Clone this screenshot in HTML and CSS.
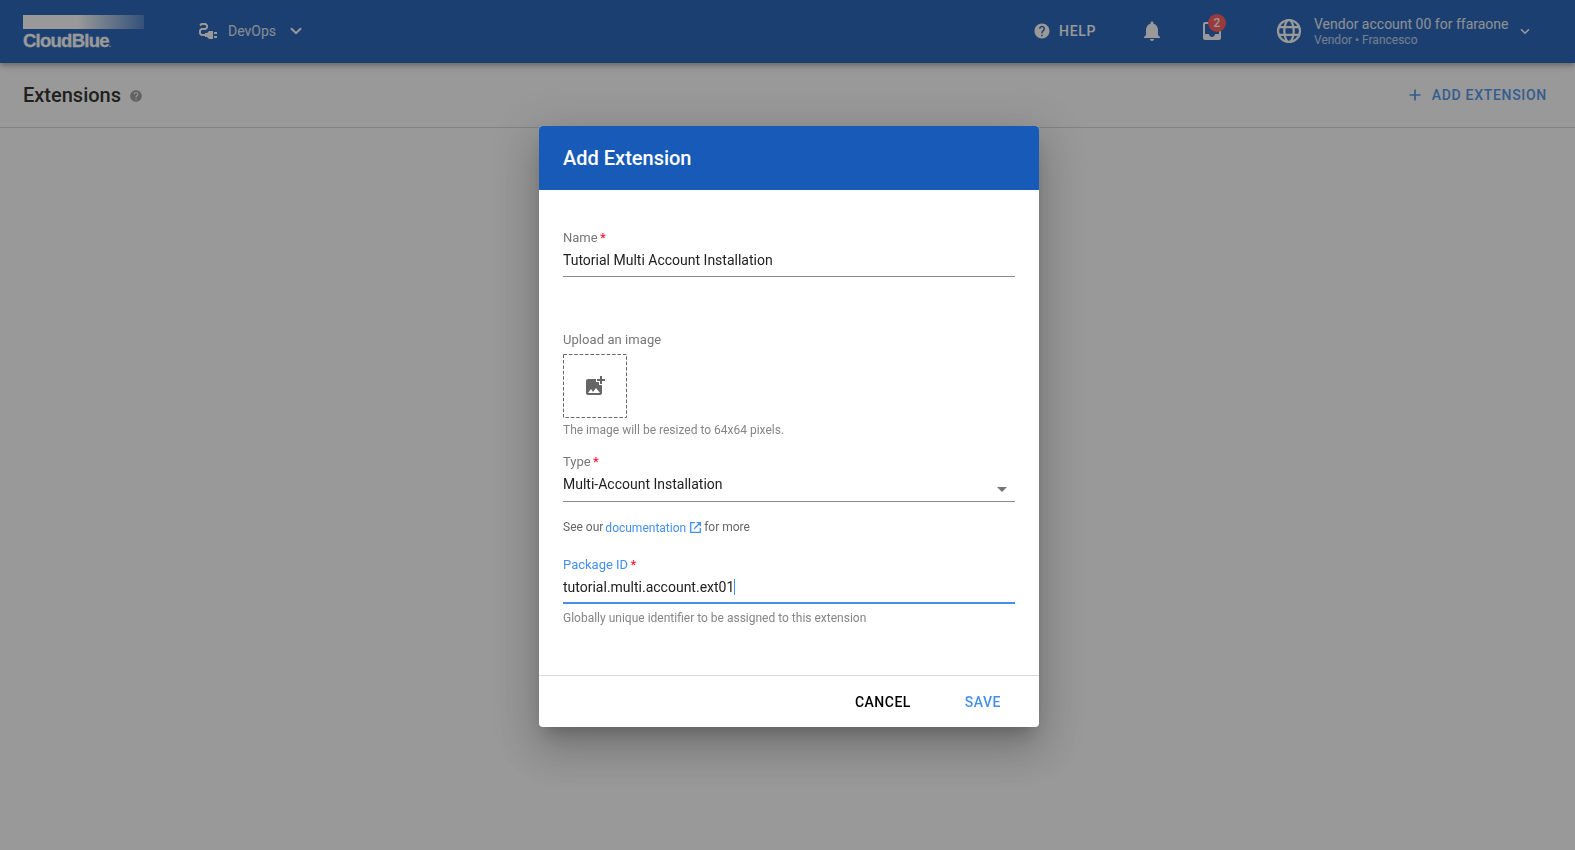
FILE: index.html
```html
<!DOCTYPE html>
<html lang="en">
<head>
<meta charset="utf-8">
<title>Extensions</title>
<link rel="stylesheet" href="styles.css">
</head>
<body>
<header class="topbar">
  <div class="brand"><div class="brand-bar"></div><div class="brand-name">CloudBlue<span class="brand-dot">.</span></div></div>
  <div class="module">
    <svg class="plug" width="18" height="17" viewBox="0 0 18 17" fill="currentColor"><path d="M1 2.500L2.500 1H6.500L8 2.500V4.500L6.500 6H2.500L1 7.500V10.500L2.500 12H6" fill="none" stroke="currentColor" stroke-width="1.900"/><path d="M10 8h4v8h-4l-2-2H6v-4h2zM15 9h3v2h-3zM15 13h3v2h-3z"/></svg>
    <span>DevOps</span>
    <svg class="module-arrow" width="12" height="8" viewBox="0 0 12 8"><path d="M1 1.200l5 5 5-5" fill="none" stroke="currentColor" stroke-width="2"/></svg>
  </div>
  <div class="help"><svg width="18" height="18" viewBox="0 0 24 24" fill="currentColor"><path d="M12 2C6.480 2 2 6.480 2 12s4.480 10 10 10 10-4.480 10-10S17.520 2 12 2zm1 17h-2v-2h2v2zm2.070-7.750-.9.920C13.450 12.900 13 13.500 13 15h-2v-.5c0-1.100.45-2.100 1.170-2.830l1.240-1.260c.37-.36.59-.86.59-1.410 0-1.100-.9-2-2-2s-2 .9-2 2H8c0-2.210 1.790-4 4-4s4 1.790 4 4c0 .88-.36 1.680-.93 2.250z"/></svg><span>HELP</span></div>
  <svg class="bell" width="24" height="24" viewBox="0 0 24 24" fill="currentColor"><path d="M12 22c1.100 0 2-.9 2-2h-4c0 1.100.9 2 2 2zm6-6v-5c0-3.070-1.630-5.640-4.500-6.320V4c0-.83-.67-1.500-1.500-1.500s-1.500.67-1.500 1.500v.68C7.640 5.360 6 7.920 6 11v5l-2 2v1h16v-1l-2-2z"/></svg>
  <div class="inbox"><svg width="24" height="24" viewBox="0 0 24 24" fill="currentColor"><path d="M19 3H5a2 2 0 0 0-2 2v14a2 2 0 0 0 2 2h14a2 2 0 0 0 2-2V5a2 2 0 0 0-2-2zm0 12h-4c0 1.660-1.350 3-3 3s-3-1.340-3-3H5V5h14v10z"/></svg><span class="badge">2</span></div>
  <svg class="globe" width="26" height="26" viewBox="0 0 26 26" fill="none" stroke="currentColor" stroke-width="2.200"><circle cx="13" cy="13" r="11"/><ellipse cx="13" cy="13" rx="4.700" ry="11"/><path d="M3 9.200h20M3 16.800h20"/></svg>
  <div class="account"><span class="account-name">Vendor account 00 for ffaraone</span><span class="account-role">Vendor • Francesco</span></div>
  <svg class="account-arrow" width="10" height="7" viewBox="0 0 10 7"><path d="M1 1.200l4 4 4-4" fill="none" stroke="currentColor" stroke-width="1.600"/></svg>
</header>
<div class="titlebar">
  <h1>Extensions</h1>
  <svg class="hint" width="14" height="14" viewBox="0 0 24 24" fill="currentColor"><path d="M12 2C6.480 2 2 6.480 2 12s4.480 10 10 10 10-4.480 10-10S17.520 2 12 2zm1 17h-2v-2h2v2zm2.070-7.750-.9.920C13.450 12.900 13 13.500 13 15h-2v-.5c0-1.100.45-2.100 1.170-2.830l1.240-1.260c.37-.36.59-.86.59-1.410 0-1.100-.9-2-2-2s-2 .9-2 2H8c0-2.210 1.790-4 4-4s4 1.790 4 4c0 .88-.36 1.680-.93 2.250z"/></svg>
  <div class="add"><svg width="12" height="12" viewBox="0 0 12 12"><path d="M6 .5v11M.5 6h11" stroke="currentColor" stroke-width="1.700"/></svg><span>ADD EXTENSION</span></div>
</div>
<div class="overlay">
  <section class="dialog">
    <div class="dialog-head">Add Extension</div>
    <div class="dialog-body">
      <div class="label">Name <b>*</b></div>
      <div class="field"><span>Tutorial Multi Account Installation</span></div>
      <div class="label upload-label">Upload an image</div>
      <div class="upload"><svg width="64" height="64" viewBox="0 0 64 64"><rect x=".5" y=".5" width="63" height="63" fill="none" stroke="#666" stroke-dasharray="3.500 1.900"/><path transform="translate(20 20)" d="M19 7v2.990s-1.990.01-2 0V7h-3s.01-1.990 0-2h3V2h2v3h3v2h-3zm-3 4V8h-3V5H5c-1.100 0-2 .9-2 2v12c0 1.100.9 2 2 2h12c1.100 0 2-.9 2-2v-8h-3zM5 19l3-4 2 3 3-4 4 5H5z" fill="#666"/></svg></div>
      <div class="note">The image will be resized to 64x64 pixels.</div>
      <div class="label type-label">Type <b>*</b></div>
      <div class="field select"><span>Multi-Account Installation</span><i class="caret"></i></div>
      <div class="docs">See our <a>documentation</a><svg width="11" height="11" viewBox="0 0 11 11" fill="none" stroke="currentColor" stroke-width="1.300"><path d="M5 .7H.7v9.600h9.600V6M6.700.7h3.600v3.600M10.200.8L4 7"/></svg><span>for more</span></div>
      <div class="label package-label">Package ID <b>*</b></div>
      <div class="field focused"><span>tutorial.multi.account.ext01</span><i class="cursor"></i></div>
      <div class="note package-note">Globally unique identifier to be assigned to this extension</div>
    </div>
    <div class="dialog-foot"><span class="cancel">CANCEL</span><span class="save">SAVE</span></div>
  </section>
</div>
</body>
</html>
```

FILE: styles.css
```css
* { box-sizing: border-box; }
body { margin: 0; height: 850px; overflow: hidden; background: #fff; color: #212121; font-family: Roboto, sans-serif; }
svg { display: block; flex: none; }
.topbar { position: relative; z-index: 1; height: 63px; padding: 0 0 1px 23px; display: flex; align-items: center; background: #185ab7; color: #fff; box-shadow: 0 2px 4px -1px rgba(0,0,0,.2), 0 4px 5px rgba(0,0,0,.14), 0 1px 10px rgba(0,0,0,.12); white-space: nowrap; }
.brand { width: 121px; height: 32px; }
.brand-bar { height: 14px; background: linear-gradient(90deg, #fff 45%, rgba(255,255,255,.2)); }
.brand-name { margin-top: 2px; font: bold 18.500px/19px "Liberation Sans", sans-serif; letter-spacing: -.75px; -webkit-text-stroke: .3px #fff; }
.brand-dot { font-size: 8px; -webkit-text-stroke: 0; }
.module { margin-left: 55px; width: 103px; display: flex; align-items: center; font-size: 14px; letter-spacing: 0; }
.module span { margin-left: 11px; width: 48px; opacity: .85; }
.module-arrow { margin-left: 14px; }
.help { margin-left: 731px; width: 64px; display: flex; align-items: center; font-size: 14px; font-weight: 500; letter-spacing: .7px; }
.help span { margin-left: 8px; }
.bell { margin-left: 43px; }
.inbox { position: relative; margin-left: 36px; }
.badge { position: absolute; left: 8px; top: -5px; width: 18px; height: 18px; border-radius: 50%; background: #ff5252; font-size: 12px; font-weight: 500; line-height: 18px; text-align: center; }
.globe { margin-left: 52px; }
.account { margin-left: 12px; width: 196px; display: flex; flex-direction: column; }
.account-name { font-size: 14px; line-height: 17px; opacity: .9; }
.account-role { font-size: 12px; line-height: 14px; opacity: .7; }
.account-arrow { margin-left: 10px; }
.titlebar { height: 65px; padding: 0 28px 0 23px; display: flex; align-items: center; border-bottom: 1px solid #d5d5d5; }
.titlebar h1 { margin: 0; font-size: 20px; font-weight: 500; }
.hint { margin: 2px 0 0 8px; color: #9a9a9a; }
.add { margin-left: auto; display: flex; align-items: center; color: #4490ec; font-size: 14px; font-weight: 500; letter-spacing: .7px; }
.add span { margin-left: 11px; }
.overlay { position: fixed; inset: 0; z-index: 2; background: rgba(33,33,33,.46); display: flex; justify-content: center; align-items: flex-start; padding: 126px 0 0 3px; }
.dialog { width: 500px; height: 601px; border-radius: 4px; overflow: hidden; background: #fff; box-shadow: 0 11px 15px -7px rgba(0,0,0,.2), 0 24px 38px 3px rgba(0,0,0,.14), 0 9px 46px 8px rgba(0,0,0,.12); display: flex; flex-direction: column; }
.dialog-head { height: 64px; padding-left: 24px; background: #185ab7; color: #fff; font-size: 20px; font-weight: 500; line-height: 64px; }
.dialog-body { height: 485px; padding: 39px 24px 0; }
.label { height: 18px; font-size: 13px; line-height: 18px; color: #777; }
.label b { margin-left: -1px; color: #ff1a35; font-weight: 500; }
.field { height: 30px; display: flex; align-items: flex-start; font-size: 14px; line-height: 26px; border-bottom: 1px solid #8a8a8a; }
.upload-label { margin-top: 54px; letter-spacing: .07px; }
.upload { margin-top: 5px; width: 64px; height: 64px; }
.note { margin-top: 4px; height: 16px; font-size: 12px; line-height: 16px; color: #858585; }
.type-label { margin-top: 15px; }
.select { height: 31px; justify-content: space-between; }
.caret { margin: 16px 8px 0 0; border: 5px solid transparent; border-top-color: #757575; border-bottom: 0; }
.docs { margin-top: 16px; height: 18px; display: flex; align-items: center; font-size: 12px; color: #666; }
.docs a { margin: 1px 4px 0 2px; }
.docs a, .docs svg { color: #4490ec; }
.docs span { margin-left: 3px; }
.package-label { margin-top: 20px; color: #4490ec; }
.focused { height: 30px; border-bottom: 2px solid #4490ec; }
.cursor { width: 1px; height: 16px; margin-top: 5px; background: #4490ec; }
.package-note { margin-top: 6px; }
.dialog-foot { flex: 1; padding-right: 38px; display: flex; justify-content: flex-end; align-items: center; border-top: 1px solid #d8d8d8; font-size: 14px; font-weight: 500; letter-spacing: .5px; }
.cancel { color: #000; }
.save { margin-left: 54px; color: #4490ec; }
```
